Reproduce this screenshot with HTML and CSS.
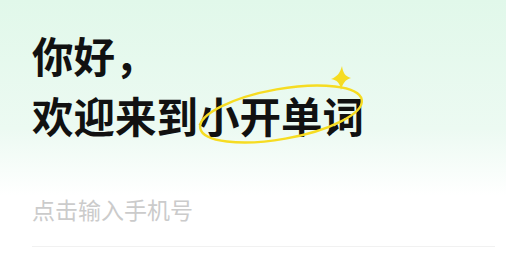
FILE: index.html
```html
<!DOCTYPE html>
<html lang="zh">
<head>
<meta charset="utf-8">
<link rel="stylesheet" href="styles.css">
</head>
<body>
<div class="page">
  <h1 class="title">
    <span class="line">你好，</span>
    <span class="line">欢迎来到<span class="brand">小开单词<svg class="ring" width="180" height="90" viewBox="0 0 180 90">
      <ellipse cx="85" cy="51" rx="82" ry="25" transform="rotate(-10 85 51)" fill="none" stroke="#f6dc22" stroke-width="2.4"/>
      <path d="M146 3 C147 10 149 13 155 15 C149 17 147 20 145 27 C144 20 141 17 135 16 C141 14 144 10 146 3 Z" fill="#f6dc22"/>
    </svg></span></span>
  </h1>
  <div class="field">
    <span class="placeholder">点击输入手机号</span>
  </div>
</div>
</body>
</html>
```

FILE: styles.css
```css
html, body {
  margin: 0;
  padding: 0;
}
body {
  width: 506px;
  height: 257px;
  overflow: hidden;
  background: linear-gradient(180deg, #e1f8ea 0%, #ecfaf2 50%, #ffffff 76%);
  font-family: "Noto Sans CJK SC", "Noto Sans", sans-serif;
}
.page {
  padding: 25px 11px 0 32px;
}
.title {
  margin: 0;
  font-size: 41.5px;
  line-height: 60px;
  font-weight: 700;
  color: #111;
  display: flex;
  flex-direction: column;
}
.line {
  display: block;
  white-space: nowrap;
}
.brand {
  position: relative;
}
.ring {
  position: absolute;
  left: -2px;
  top: -22px;
  pointer-events: none;
}
.field {
  margin-top: 48px;
  height: 53px;
  border-bottom: 1px solid #f1f1f1;
  display: flex;
  align-items: flex-start;
}
.placeholder {
  font-size: 23px;
  line-height: 32px;
  color: #cbcbcb;
}
```
